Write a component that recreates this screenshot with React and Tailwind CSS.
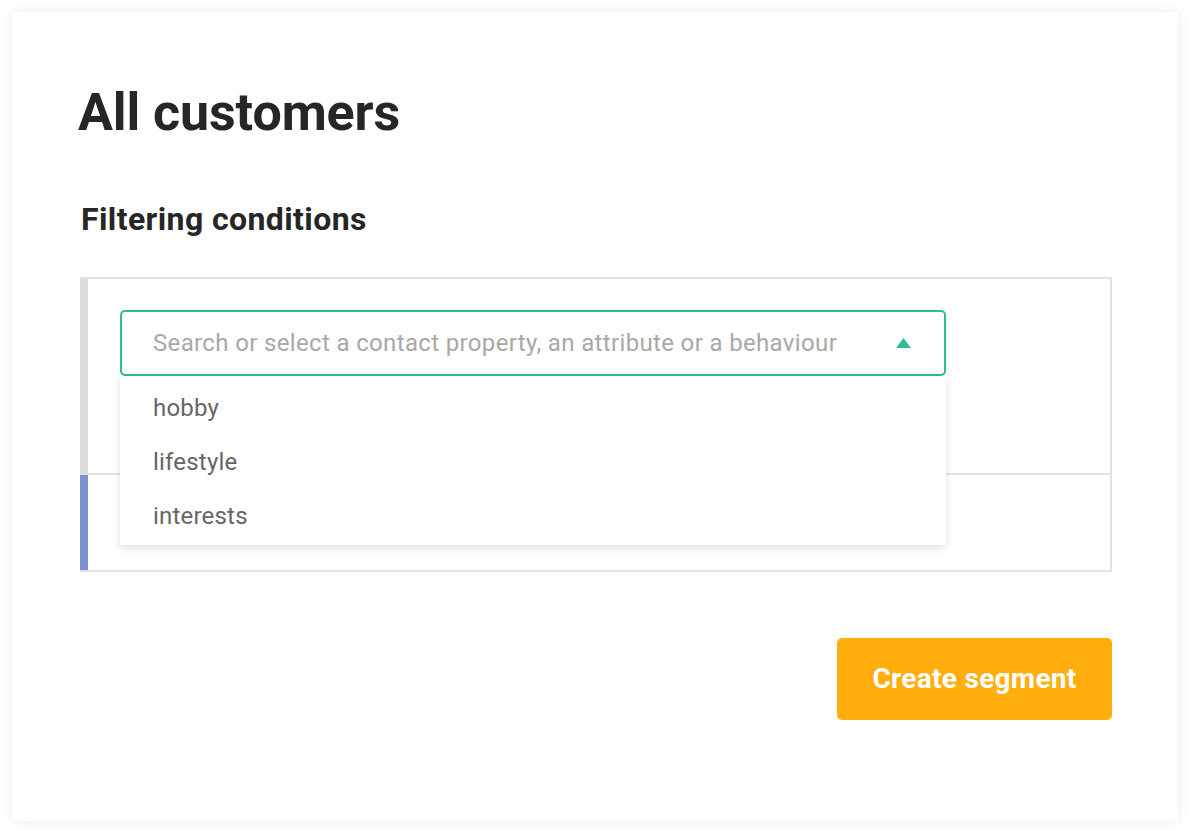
import React from 'react';

const options = ['hobby', 'lifestyle', 'interests'];

export default function App() {
  return (
    <div className="min-h-screen bg-white p-3 font-['Roboto',sans-serif]">
      <div className="relative h-[809px] w-[1166px] bg-white pl-[66px] pr-[66px] pt-[71px] shadow-[0_0_12px_rgba(0,0,0,0.08)]">
        <h1 className="text-[52px] font-bold leading-[60px] tracking-[-0.1px] text-[#262626]">All customers</h1>
        <h2 className="mt-[56px] ml-[3px] text-[32px] font-bold leading-[40px] tracking-[0.4px] text-[#262626]">Filtering conditions</h2>

        {/* Conditions box */}
        <div className="ml-[2px] mt-[38px] flex flex-col border-2 border-l-0 border-[#e2e2e2]">
          <div className="relative flex h-[194px]">
            <div className="w-[8px] bg-[#dcdcdc]" />
            <div className="pl-[32px] pt-[31px]">
              <div className="flex h-[66px] w-[826px] items-center justify-between rounded-[5px] border-2 border-[#2dbb98] pl-[31px] pr-[33px]">
                <span className="text-[24px] tracking-[0.35px] text-[#a8a8a8]">Search or select a contact property, an attribute or a behaviour</span>
                <svg width="15" height="10" viewBox="0 0 15 10">
                  <path d="M7.5 0 L15 10 L0 10 Z" fill="#2dbb98" />
                </svg>
              </div>
            </div>

            {/* Dropdown menu */}
            <div className="absolute left-[40px] top-[97px] z-10 w-[826px] bg-white pt-[5px] pb-[2px] shadow-[0_3px_8px_rgba(0,0,0,0.12)]">
              {options.map((o) => (
                <div key={o} className="flex h-[54px] items-center pl-[33px] text-[24px] tracking-[0.2px] text-[#666666]">
                  {o}
                </div>
              ))}
            </div>
          </div>
          <div className="flex h-[97px] border-t-2 border-[#e2e2e2]">
            <div className="w-[8px] bg-[#7b93d0]" />
          </div>
        </div>

        <div className="mt-[66px] flex justify-end">
          <button className="h-[82px] w-[275px] rounded-[5px] bg-[#ffae0e] text-[28px] font-bold tracking-[0.3px] text-white">
            Create segment
          </button>
        </div>
      </div>
    </div>
  );
}
